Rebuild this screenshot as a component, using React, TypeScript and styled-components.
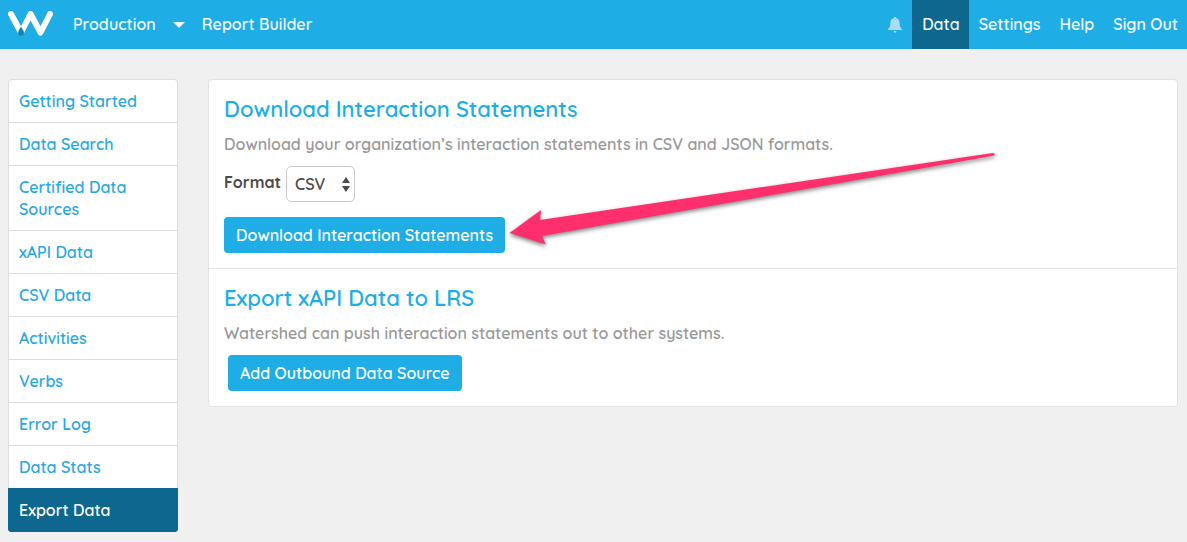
import React from "react";
import styled, { createGlobalStyle } from "styled-components";

const blue = "#1eaee5";
const navy = "#0e678f";
const line = "#dddddd";

const GlobalStyle = createGlobalStyle`
  *, *::before, *::after { box-sizing: border-box; }
  body {
    margin: 0;
    background: #f0f0f0;
    color: #4a4a4a;
    font: 600 16px/22px Quicksand, Lato, "Liberation Sans", sans-serif;
  }
  a { color: inherit; text-decoration: none; }
  h2, p, ul { margin: 0; padding: 0; }
  button, select { font: inherit; }
`;

const Header = styled.header`
  display: flex;
  align-items: stretch;
  height: 49px;
  background: ${blue};
  color: #f0f6f9;
`;

const Logo = styled.a`
  display: flex;
  align-items: center;
  padding: 0 10px 2px 8px;
`;

const NavGroup = styled.nav<{ $end?: boolean }>`
  display: flex;
  align-items: stretch;
  margin-left: ${(p) => (p.$end ? "auto" : "0")};
`;

const NavLink = styled.a<{ $active?: boolean }>`
  display: flex;
  align-items: center;
  padding: 0 9px 2px 10px;
  background: ${(p) => (p.$active ? navy : "transparent")};
`;

const IconButton = styled.button`
  display: flex;
  align-items: center;
  padding: 0 7px 0 8px;
  border: 0;
  background: none;
  color: inherit;
`;

const Page = styled.div`
  display: flex;
  align-items: flex-start;
  gap: 30px;
  padding: 30px 9px 10px 8px;
`;

const Sidebar = styled.nav`
  flex: 0 0 170px;
`;

const SideList = styled.ul`
  list-style: none;
  border-radius: 4px;
  overflow: hidden;
`;

const SideLink = styled.a<{ $active?: boolean }>`
  display: block;
  padding: 10px;
  border: 1px solid ${(p) => (p.$active ? navy : line)};
  border-bottom-width: ${(p) => (p.$active ? "1px" : "0")};
  background: ${(p) => (p.$active ? navy : "#ffffff")};
  color: ${(p) => (p.$active ? "#ffffff" : "#29a9e0")};

  li:first-child > & { border-radius: 4px 4px 0 0; }
`;

const Card = styled.main`
  flex: 1;
  min-width: 0;
  border: 1px solid #e3e3e3;
  border-radius: 4px;
  background: #ffffff;
`;

const Section = styled.section`
  padding: 15px;

  & + & { border-top: 1px solid #e3e3e3; }
`;

const Title = styled.h2`
  color: ${blue};
  font-size: 22px;
  font-weight: 600;
  line-height: 28px;
`;

const Description = styled.p`
  margin: 10px 0 11px;
  color: #999999;
`;

const Field = styled.div`
  display: flex;
  align-items: center;
  gap: 5px;
  margin-bottom: 15px;
`;

const Label = styled.label`
  padding-bottom: 4px;
  font-weight: 700;
`;

const SelectBox = styled.div`
  display: grid;
  align-items: center;
  justify-items: end;

  & > * { grid-area: 1 / 1; }
  svg { margin-right: 5px; pointer-events: none; }
`;

const Select = styled.select`
  width: 69px;
  height: 36px;
  padding: 0 8px;
  border: 1px solid #c8c8c8;
  border-radius: 5px;
  background: #ffffff;
  color: #4a4a4a;
  appearance: none;
`;

const Action = styled.div<{ $inset?: boolean }>`
  position: relative;
  width: fit-content;
  margin-left: ${(p) => (p.$inset ? "4px" : "0")};
`;

const Button = styled.button`
  display: block;
  height: 36px;
  padding: 0 12px;
  border: 0;
  border-radius: 4px;
  background: ${blue};
  color: #ffffff;
`;

const Arrow = styled.svg`
  position: absolute;
  left: 100%;
  bottom: 0;
  overflow: visible;
  pointer-events: none;
  filter: drop-shadow(0 2px 2px rgba(0, 0, 0, 0.5));
`;

const sideItems = [
  "Getting Started",
  "Data Search",
  "Certified Data Sources",
  "xAPI Data",
  "CSV Data",
  "Activities",
  "Verbs",
  "Error Log",
  "Data Stats",
  "Export Data",
];

const navItems = ["Data", "Settings", "Help", "Sign Out"];

export default function App() {
  return (
    <>
      <GlobalStyle />
      <Header>
        <Logo href="#" aria-label="Home">
          <svg width="45" height="25" viewBox="0 0 45 25" fill="none">
            <path
              d="M3 3L13 21.500L22.500 3L32.500 21.500L42 3"
              stroke="#fff"
              strokeWidth="6"
              strokeLinecap="round"
              strokeLinejoin="round"
            />
            <path d="M13 15.500C14 18 16 19.500 16 22a3 3 0 0 1-6 0C10 19.500 12 18 13 15.500Z" fill="#1583b0" />
          </svg>
        </Logo>
        <NavGroup aria-label="Workspace">
          <NavLink href="#">Production</NavLink>
          <IconButton aria-label="Choose workspace">
            <svg width="12" height="6" viewBox="0 0 12 6">
              <path d="M0 0h12L6 6z" fill="currentColor" />
            </svg>
          </IconButton>
          <NavLink href="#">Report Builder</NavLink>
        </NavGroup>
        <NavGroup $end aria-label="Account">
          <IconButton aria-label="Notifications">
            <svg width="20" height="18" viewBox="0 0 20 18" fill="#a9dcf2">
              <path d="M10 1c.7 0 1.100.5 1.200 1.100 2.200.6 3.300 2.400 3.400 4.700.1 3.500.8 5 2.400 6.200v1H3v-1c1.600-1.200 2.300-2.700 2.400-6.200.1-2.300 1.200-4.100 3.400-4.700C8.900 1.500 9.300 1 10 1Z" />
              <path d="M8.500 15h3a1.500 1.800 0 0 1-3 0Z" />
            </svg>
          </IconButton>
          {navItems.map((item) => (
            <NavLink key={item} href="#" $active={item === "Data"}>
              {item}
            </NavLink>
          ))}
        </NavGroup>
      </Header>
      <Page>
        <Sidebar aria-label="Data">
          <SideList>
            {sideItems.map((item) => (
              <li key={item}>
                <SideLink href="#" $active={item === "Export Data"}>
                  {item}
                </SideLink>
              </li>
            ))}
          </SideList>
        </Sidebar>
        <Card>
          <Section>
            <Title>Download Interaction Statements</Title>
            <Description>
              Download your organization’s interaction statements in CSV and JSON formats.
            </Description>
            <Field>
              <Label htmlFor="format">Format</Label>
              <SelectBox>
                <Select id="format" defaultValue="CSV">
                  <option>CSV</option>
                  <option>JSON</option>
                </Select>
                <svg width="8" height="15" viewBox="0 0 8 15" fill="#4a4a4a">
                  <path d="M4 0l4 6H0zM4 15L0 9h8z" />
                </svg>
              </SelectBox>
            </Field>
            <Action>
              <Button type="button">Download Interaction Statements</Button>
              <Arrow width="490" height="100" viewBox="505 153 490 100" aria-hidden="true">
                <path
                  d="M509.500 233L541 210L540 220L993 153Q995 153 994.500 155.500L542 236L546 244.500Z"
                  fill="#ff2f6d"
                />
              </Arrow>
            </Action>
          </Section>
          <Section>
            <Title>Export xAPI Data to LRS</Title>
            <Description>Watershed can push interaction statements out to other systems.</Description>
            <Action $inset>
              <Button type="button">Add Outbound Data Source</Button>
            </Action>
          </Section>
        </Card>
      </Page>
    </>
  );
}
